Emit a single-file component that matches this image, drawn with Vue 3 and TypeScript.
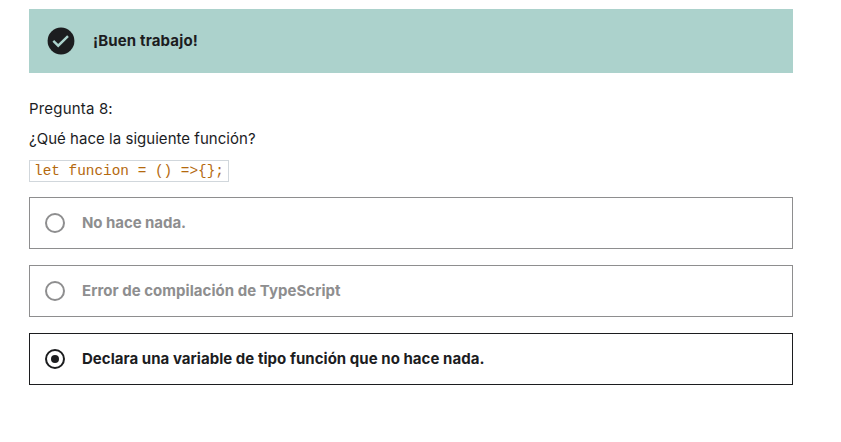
<script setup lang="ts">
import { ref } from 'vue'

interface Answer {
  id: string
  text: string
}

const answers: Answer[] = [
  { id: 'nothing', text: 'No hace nada.' },
  { id: 'error', text: 'Error de compilación de TypeScript' },
  { id: 'declares', text: 'Declara una variable de tipo función que no hace nada.' },
]
const selected = ref('declares')
</script>

<template>
  <main class="quiz">
    <div class="alert">
      <svg class="alert-icon" viewBox="0 0 28 28" aria-hidden="true">
        <circle cx="14" cy="14" r="13.4" fill="#1c1d1f" />
        <path d="M6.3 13.9l4.9 4.8L21 9.1" fill="none" stroke="#acd2cc" stroke-width="2.4" />
      </svg>
      <span class="alert-title">¡Buen trabajo!</span>
    </div>
    <p class="line number">Pregunta 8:</p>
    <p class="line prompt">¿Qué hace la siguiente función?</p>
    <div class="code-row"><code>let funcion = () =&gt;{};</code></div>
    <ul class="answers">
      <li
        v-for="answer in answers"
        :key="answer.id"
        class="answer"
        :class="[answer.id, { selected: selected === answer.id }]"
      >
        <svg class="radio" viewBox="0 0 20 20" aria-hidden="true">
          <circle cx="10" cy="10" r="9" fill="none" stroke="currentColor" stroke-width="2" />
          <circle v-if="selected === answer.id" cx="10" cy="10" r="4" fill="currentColor" />
        </svg>
        <span class="label">{{ answer.text }}</span>
      </li>
    </ul>
  </main>
</template>

<style>
body {
  background: #fff;
}
</style>

<style scoped>
.quiz {
  box-sizing: border-box;
  width: 793px;
  padding: 9px 0 0 29px;
  color: #1c1d1f;
  font-family: Inter, "Liberation Sans", sans-serif;
  font-size: 15px;
}
.alert {
  display: flex;
  align-items: center;
  height: 64px;
  padding-left: 18px;
  box-sizing: border-box;
  background: #acd2cc;
}
.alert-icon {
  width: 28px;
  height: 28px;
  margin-right: 18px;
}
.alert-title,
.label {
  padding-bottom: 2px;
  font-weight: 700;
  white-space: nowrap;
}
.alert-title {
  letter-spacing: 0.15px;
}
.line {
  margin: 0;
  line-height: 22px;
}
.number {
  margin-top: 25px;
  letter-spacing: 0.18px;
}
.prompt {
  margin-top: 8px;
  letter-spacing: 0.03px;
}
.code-row {
  display: flex;
  margin-top: 10px;
}
code {
  box-sizing: border-box;
  height: 22px;
  padding: 0 4px;
  border: 1px solid #d1d7dc;
  color: #b4690e;
  font: 14.4px/20px "Liberation Mono", monospace;
}
.answers {
  display: grid;
  gap: 16px;
  margin: 15px 0 0;
  padding: 0;
  list-style: none;
}
.answer {
  display: flex;
  align-items: center;
  gap: 17px;
  box-sizing: border-box;
  height: 52px;
  padding-left: 15px;
  border: 1px solid #8e8e8f;
  color: #8e8e8f;
  letter-spacing: 0.04px;
}
.answer.nothing {
  letter-spacing: -0.06px;
}
.answer.selected {
  border-color: #1c1d1f;
  color: #1c1d1f;
}
.radio {
  width: 20px;
  height: 20px;
}
</style>
